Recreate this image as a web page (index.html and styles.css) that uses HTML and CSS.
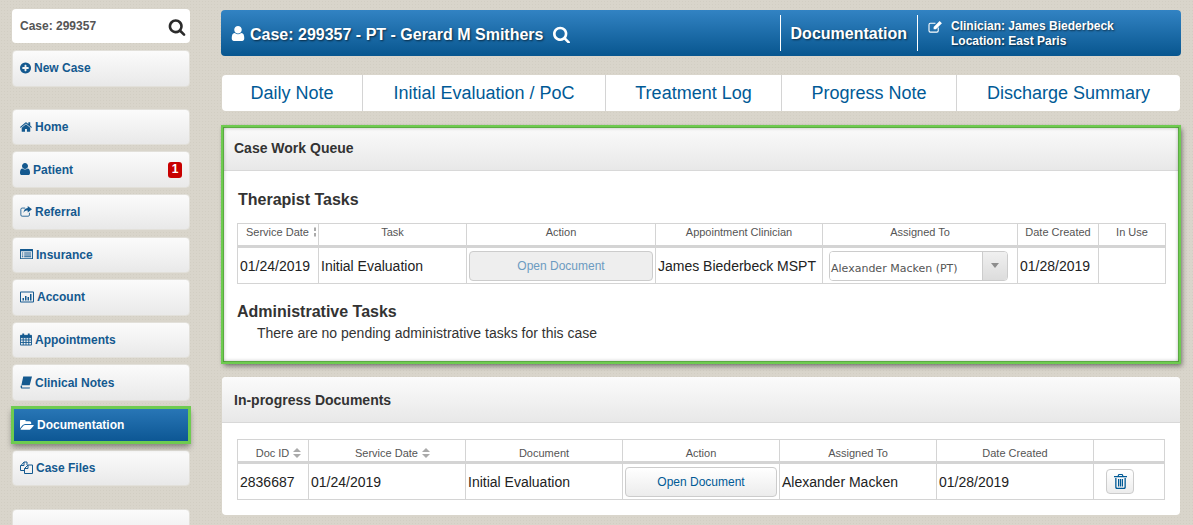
FILE: index.html
```html
<!DOCTYPE html>
<html lang="en">
<head>
    <meta charset="UTF-8">
    <meta name="viewport" content="width=device-width, initial-scale=1.0">
    <title>Case Work Queue</title>
    <link rel="stylesheet" href="styles.css">
</head>
<body>
    <div class="page">
        <aside class="sidebar">
            <div class="case-search">
                <span>Case: 299357</span>
                <svg class="search-icon" viewBox="0 0 1792 1792"><path d="M1216 832q0-185-131.500-316.500t-316.500-131.500-316.500 131.500-131.500 316.500 131.500 316.500 316.500 131.500 316.500-131.500 131.500-316.500zm512 832q0 52-38 90t-90 38q-54 0-90-38l-343-342q-179 124-399 124-143 0-273.500-55.500t-225-150-150-225-55.500-273.500 55.500-273.500 150-225 225-150 273.500-55.500 273.500 55.500 225 150 150 225 55.500 273.500q0 220-124 399l343 343q37 37 37 90z"/></svg>
            </div>
            <a class="nav-item new-case">
                <svg class="nav-icon" viewBox="128 128 1536 1536"><path d="M1344 960v-128q0-26-19-45t-45-19h-256v-256q0-26-19-45t-45-19h-128q-26 0-45 19t-19 45v256h-256q-26 0-45 19t-19 45v128q0 26 19 45t45 19h256v256q0 26 19 45t45 19h128q26 0 45-19t19-45v-256h256q26 0 45-19t19-45zm320-64q0 209-103 385.500t-279.500 279.500-385.500 103-385.500-103-279.500-279.500-103-385.500 103-385.500 279.500-279.500 385.500-103 385.500 103 279.500 279.500 103 385.500z"/></svg>
                New Case
            </a>
            <nav class="nav-list">
                <a class="nav-item">
                    <svg class="nav-icon wide" viewBox="90 230 1620 1320"><path d="M1472 992v480q0 26-19 45t-45 19h-384v-384h-256v384h-384q-26 0-45-19t-19-45v-480q0-1 .5-3t.5-3l575-474 575 474q1 2 1 6zm223-69l-62 74q-8 9-21 11h-3q-13 0-21-7l-692-577-692 577q-12 8-24 7-13-2-21-11l-62-74q-8-10-7-23.500t11-21.500l719-599q32-26 76-26t76 26l244 204v-195q0-14 9-23t23-9h192q14 0 23 9t9 23v408l219 182q10 8 11 21.500t-7 23.500z"/></svg>
                    Home
                </a>
                <a class="nav-item">
                    <svg class="nav-icon slim" viewBox="256 128 1280 1536"><path d="M1536 1399q0 109-62.500 187t-150.500 78h-854q-88 0-150.500-78t-62.500-187q0-85 8.500-160.500t31.500-152 58.500-131 94-89 134.500-34.500q131 128 313 128t313-128q76 0 134.500 34.500t94 89 58.500 131 31.500 152 8.500 160.500zm-256-887q0 159-112.500 271.500t-271.500 112.500-271.500-112.500-112.500-271.500 112.500-271.500 271.500-112.500 271.500 112.500 112.500 271.500z"/></svg>
                    Patient
                    <span class="badge">1</span>
                </a>
                <a class="nav-item">
                    <svg class="nav-icon wide tall" viewBox="0 0 14 13"><path class="line" d="M6 2.500H2.500A1.500 1.500 0 0 0 1 4v6.500A1.500 1.500 0 0 0 2.500 12h7a1.500 1.500 0 0 0 1.500-1.500V8"/><path d="M9 0l5 3.800-5 3.800V5.400C6.500 5.400 5 6 4.200 8.200 4 5 6 2.500 9 2.300z"/></svg>
                    Referral
                </a>
                <a class="nav-item">
                    <svg class="nav-icon wide13" viewBox="0 0 14 11"><path class="fill-even" d="M0.500 0h13a.5.5 0 0 1 .5.500v10a.5.5 0 0 1-.5.500H.5a.5.5 0 0 1-.5-.5V.5A.5.5 0 0 1 .5 0zM1 2.500V10h12V2.500z"/><path d="M2 4h1.500v1H2zM4.500 4H12v1H4.500zM2 6h1.500v1H2zM4.500 6H12v1H4.500zM2 8h1.500v1H2zM4.500 8H12v1H4.500z"/></svg>
                    Insurance
                </a>
                <a class="nav-item">
                    <svg class="nav-icon wider" viewBox="0 0 14 11"><path class="fill-even" d="M1 0h12a1 1 0 0 1 1 1v9a1 1 0 0 1-1 1H1a1 1 0 0 1-1-1V1a1 1 0 0 1 1-1zm0 1v9h12V1z"/><path d="M2.500 6.500h1.500V9H2.500zM5 4.500h1.500V9H5zM7.500 5.500H9V9H7.500zM10 2.500h1.500V9H10z"/></svg>
                    Account
                </a>
                <a class="nav-item">
                    <svg class="nav-icon wide tall" viewBox="0 0 13 13"><path class="line" d="M.5 2h12v10.500H.5zM.5 4.500h12M.5 7h12M.5 9.700h12M3.500 4.500v8M6.500 4.500v8M9.500 4.500v8"/><path d="M2.500 0h2v3h-2zM8.500 0h2v3h-2zM.5 2h12v2.500H.5z"/></svg>
                    Appointments
                </a>
                <a class="nav-item">
                    <svg class="nav-icon wide tall" viewBox="0 0 13 13"><path d="M3.500 0H13l-2.500 9.500H1.500z"/><path d="M1.200 9.500C.4 10.300.4 12.200 1.500 13H10.500l.4-1H2.500c-.6-.4-.6-1.300 0-1.800z"/></svg>
                    Clinical Notes
                </a>
                <a class="nav-item active">
                    <svg class="nav-icon folder" viewBox="0 256 1920 1280"><path d="M1879 952q0 31-31 66l-336 396q-43 51-120.500 86.500t-143.500 35.500h-1088q-34 0-60.500-13t-26.500-43q0-31 31-66l336-396q43-51 120.500-86.500t143.500-35.500h1088q34 0 60.500 13t26.500 43zm-343-344v160h-832q-94 0-197 47.500t-164 119.500l-337 396-5 6q0-4-.5-12.500t-.5-12.500v-960q0-92 66-158t158-66h320q92 0 158 66t66 158v32h544q92 0 158 66t66 158z"/></svg>
                    Documentation
                </a>
                <a class="nav-item">
                    <svg class="nav-icon wide13 tall" viewBox="0 0 13 13"><path class="line" d="M4.500 9.500H.5V5l3.500-4h3v3"/><path class="line" d="M4.500 12.500V7.500L8 4h4.500v8.500z"/><path class="line" d="M4 1v3.500H.5M8 4v3.500H4.500"/></svg>
                    Case Files
                </a>
            </nav>
            <div class="nav-item blank"></div>
        </aside>

        <main class="content">
            <header class="case-bar">
                <div class="case-title">
                    <svg class="bar-icon" viewBox="256 128 1280 1536"><path d="M1536 1399q0 109-62.500 187t-150.500 78h-854q-88 0-150.500-78t-62.500-187q0-85 8.500-160.500t31.500-152 58.500-131 94-89 134.500-34.500q131 128 313 128t313-128q76 0 134.500 34.500t94 89 58.500 131 31.500 152 8.500 160.500zm-256-887q0 159-112.500 271.500t-271.500 112.500-271.500-112.500-112.500-271.500 112.500-271.500 271.500-112.500 271.500 112.500 112.500 271.500z"/></svg>
                    Case: 299357 - PT - Gerard M Smithers
                    <svg class="bar-search" viewBox="64 64 1664 1664"><path d="M1216 832q0-185-131.500-316.500t-316.500-131.500-316.500 131.500-131.500 316.500 131.500 316.500 316.500 131.500 316.500-131.500 131.500-316.500zm512 832q0 52-38 90t-90 38q-54 0-90-38l-343-342q-179 124-399 124-143 0-273.500-55.500t-225-150-150-225-55.500-273.500 55.500-273.500 150-225 225-150 273.500-55.500 273.500 55.500 225 150 150 225 55.500 273.500q0 220-124 399l343 343q37 37 37 90z"/></svg>
                </div>
                <div class="case-section">Documentation</div>
                <div class="case-clinician">
                    <svg class="edit-icon" viewBox="0 0 15 13"><path class="bar-line" d="M8 2.500H2.500A1.500 1.500 0 0 0 1 4v6.500A1.500 1.500 0 0 0 2.500 12h7a1.500 1.500 0 0 0 1.500-1.500V7"/><path d="M12.500 0L15 2.500 8.500 9H6V6.500z"/></svg>
                    <div class="clinician-text">
                        <div>Clinician: James Biederbeck</div>
                        <div>Location: East Paris</div>
                    </div>
                </div>
            </header>

            <nav class="doc-tabs">
                <a class="doc-tab">Daily Note</a>
                <a class="doc-tab">Initial Evaluation / PoC</a>
                <a class="doc-tab">Treatment Log</a>
                <a class="doc-tab">Progress Note</a>
                <a class="doc-tab">Discharge Summary</a>
            </nav>

            <section class="panel queue-panel">
                <h2 class="panel-heading">Case Work Queue</h2>
                <div class="panel-body">
                    <h3 class="task-title">Therapist Tasks</h3>
                    <table class="data-table queue-table">
                        <colgroup><col><col><col><col><col><col><col></colgroup>
                        <thead>
                            <tr>
                                <th>Service Date<span class="sort clipped"><svg viewBox="0 0 8 10"><path d="M4 0l4 4H0zM0 6h8l-4 4z"/></svg></span></th>
                                <th>Task</th>
                                <th>Action</th>
                                <th>Appointment Clinician</th>
                                <th>Assigned To</th>
                                <th>Date Created</th>
                                <th>In Use</th>
                            </tr>
                        </thead>
                        <tbody>
                            <tr>
                                <td>01/24/2019</td>
                                <td>Initial Evaluation</td>
                                <td><button class="doc-btn disabled" type="button">Open Document</button></td>
                                <td>James Biederbeck MSPT</td>
                                <td>
                                    <div class="assign-select">
                                        <span class="assign-value">Alexander Macken (PT)</span>
                                        <span class="assign-arrow"></span>
                                    </div>
                                </td>
                                <td>01/28/2019</td>
                                <td></td>
                            </tr>
                        </tbody>
                    </table>
                    <h3 class="task-title admin-title">Administrative Tasks</h3>
                    <p class="no-tasks">There are no pending administrative tasks for this case</p>
                </div>
            </section>

            <section class="panel docs-panel">
                <h2 class="panel-heading">In-progress Documents</h2>
                <div class="panel-body">
                    <table class="data-table docs-table">
                        <colgroup><col><col><col><col><col><col><col></colgroup>
                        <thead>
                            <tr>
                                <th class="sortable">Doc ID<span class="sort"><svg viewBox="0 0 8 10"><path d="M4 0l4 4H0zM0 6h8l-4 4z"/></svg></span></th>
                                <th class="sortable">Service Date<span class="sort"><svg viewBox="0 0 8 10"><path d="M4 0l4 4H0zM0 6h8l-4 4z"/></svg></span></th>
                                <th>Document</th>
                                <th>Action</th>
                                <th>Assigned To</th>
                                <th>Date Created</th>
                                <th></th>
                            </tr>
                        </thead>
                        <tbody>
                            <tr>
                                <td>2836687</td>
                                <td>01/24/2019</td>
                                <td>Initial Evaluation</td>
                                <td><button class="doc-btn" type="button">Open Document</button></td>
                                <td>Alexander Macken</td>
                                <td>01/28/2019</td>
                                <td class="trash-cell">
                                    <button class="trash-btn" type="button">
                                        <svg viewBox="0 0 13 15"><path d="M4.500 0h4l1 2H13v1.300H0V2h3.500zM5.200 1l-.4 1h3.400l-.4-1z"/><path d="M1.200 4H2.500v9c0 .5.300.8.700.8h6.600c.4 0 .7-.3.7-.8V4h1.300v9.200c0 1-.7 1.800-1.600 1.800H2.800c-.9 0-1.600-.8-1.600-1.800z"/><path d="M4 5h1.200v7.500H4zM5.900 5h1.200v7.500H5.900zM7.800 5H9v7.500H7.800z"/></svg>
                                    </button>
                                </td>
                            </tr>
                        </tbody>
                    </table>
                </div>
            </section>
        </main>
    </div>
</body>
</html>
```

FILE: styles.css
```css
html, body {
    height: 525px;
    overflow: hidden;
}

body {
    font-family: "Liberation Sans", Arial, sans-serif;
    margin: 0;
    padding: 0;
    background-color: #d9d5cb;
    background-image: radial-gradient(#d2cec3 1px, transparent 1px);
    background-size: 3px 3px;
    color: #222;
}

.page {
    display: flex;
    align-items: flex-start;
    padding: 9px 0 0 12px;
}

/* sidebar */
.sidebar {
    width: 178px;
    flex: none;
    display: flex;
    flex-direction: column;
}

.case-search {
    display: flex;
    align-items: center;
    justify-content: space-between;
    height: 34px;
    padding: 0 4px 0 8px;
    background-color: #fff;
    border-radius: 4px;
    font-size: 12px;
    font-weight: bold;
    color: #555;
    margin-bottom: 7px;
}

.search-icon {
    width: 18px;
    height: 18px;
    fill: #2b2b2b;
    margin-top: 2px;
}

.nav-item {
    display: flex;
    align-items: center;
    gap: 3px;
    height: 36.5px;
    padding: 0 7px;
    box-sizing: border-box;
    background: linear-gradient(#fbfbfb, #e9e9e9);
    border: 1px solid #e2e0da;
    border-radius: 4px;
    font-size: 12px;
    font-weight: bold;
    color: #14598f;
    position: relative;
}

.new-case {
    margin-bottom: 22.3px;
}

.nav-list {
    display: flex;
    flex-direction: column;
    gap: 6.1px;
}

.nav-icon {
    width: 11px;
    height: 12px;
    fill: #14598f;
    flex: none;
    margin-top: -1px;
}

.nav-icon.slim {
    width: 10px;
}

.nav-icon.wide {
    width: 12px;
}

.nav-icon.wide13 {
    width: 13px;
}

.nav-icon.wider {
    width: 14px;
}

.nav-icon.tall {
    height: 13px;
}

.nav-icon .line {
    fill: none;
    stroke: #14598f;
    stroke-width: 1;
}

.nav-icon .fill-even {
    fill-rule: evenodd;
}

.nav-icon.folder {
    width: 14px;
    height: 10px;
    fill: #fff;
    margin-right: 0;
}

.badge {
    margin-left: auto;
    width: 14px;
    height: 16px;
    background-color: #c80000;
    color: #fff;
    border-radius: 3px;
    font-size: 12px;
    line-height: 15px;
    text-align: center;
}

.nav-item.active {
    background: linear-gradient(#2a78b8, #0b5592);
    border: none;
    border-radius: 0;
    color: #fff;
    outline: 3px solid #6ecb50;
    outline-offset: -2px;
    box-shadow: 0 4px 6px rgba(0, 0, 0, 0.4);
    padding-left: 8px;
    z-index: 1;
}

.nav-item.blank {
    margin-top: 23px;
}

/* main column */
.content {
    width: 960px;
    margin-left: 31px;
    margin-top: 1px;
    flex: none;
}

.case-bar {
    display: flex;
    align-items: stretch;
    height: 46px;
    padding: 5px 0;
    box-sizing: border-box;
    background: linear-gradient(#3283c3, #08568f);
    border-radius: 4px;
    color: #fff;
    text-shadow: 1px 1px 2px rgba(0, 0, 0, 0.6);
    font-weight: bold;
}

.case-title {
    display: flex;
    align-items: center;
    flex: 1;
    padding: 3px 0 0 10px;
    font-size: 16px;
}

.bar-icon {
    width: 14px;
    height: 15px;
    fill: #fff;
    margin: -3px 5px 0 0;
}

.bar-search {
    width: 17px;
    height: 17px;
    fill: #fff;
    margin-left: 10px;
}

.case-section {
    display: flex;
    align-items: center;
    padding: 2px 10px 0;
    font-size: 16px;
    border-left: 1px solid #fff;
    border-right: 1px solid #fff;
}

.case-clinician {
    display: flex;
    width: 263px;
    box-sizing: border-box;
    padding: 6px 0 0 10px;
    font-size: 12px;
    line-height: 15px;
}

.edit-icon {
    width: 14px;
    height: 12px;
    fill: #fff;
    margin: 0 9px 0 0;
    flex: none;
}

.edit-icon .bar-line {
    fill: none;
    stroke: #fff;
    stroke-width: 1.2;
}

.clinician-text {
    margin-top: -2px;
}

.doc-tabs {
    display: flex;
    height: 36px;
    margin: 19px 1px 15px;
    background-color: #fff;
    border-radius: 4px;
}

.doc-tab {
    display: flex;
    align-items: center;
    justify-content: center;
    flex: 0 0 auto;
    font-size: 18px;
    color: #005a96;
    border-left: 1px solid #d4d4d4;
}

.doc-tab:nth-child(1) { width: 140px; border-left: none; }
.doc-tab:nth-child(2) { width: 242px; }
.doc-tab:nth-child(3) { width: 175px; }
.doc-tab:nth-child(4) { width: 174px; }
.doc-tab:nth-child(5) { width: 223px; }

/* panels */
.panel {
    margin: 0 1px;
    background-color: #fff;
    border-radius: 4px;
}

.queue-panel {
    position: relative;
    height: 237px;
    border-radius: 0;
    outline: 3px solid #6ecb50;
    outline-offset: -2px;
    box-shadow: 2px 3px 5px rgba(0, 0, 0, 0.45), 0 0 3px rgba(0, 0, 0, 0.2);
    margin-bottom: 14px;
}

/* soft shadow just inside the green highlight */
.queue-panel::after {
    content: "";
    position: absolute;
    top: 1px;
    right: 1px;
    bottom: 1px;
    left: 1px;
    box-shadow: inset 0 0 4px rgba(0, 0, 0, 0.4);
}

.docs-panel {
    height: 138px;
}

.panel-heading {
    margin: 0;
    height: 46px;
    padding-left: 12px;
    box-sizing: border-box;
    background: linear-gradient(#fbfbfb, #e8e8e8);
    border-bottom: 1px solid #d8d8d8;
    border-radius: 4px 4px 0 0;
    font-size: 14px;
    line-height: 47px;
    color: #333;
}

.queue-panel .panel-heading {
    height: 45px;
    line-height: 44px;
    border-radius: 0;
}

.panel-body {
    padding: 16px 15px 0;
}

.queue-panel .panel-body {
    padding-top: 20px;
}

.task-title {
    margin: 0 0 14px 1px;
    font-size: 16px;
    line-height: 18px;
    color: #333;
}

.admin-title {
    margin: 19px 0 3px;
}

.no-tasks {
    margin: 0 0 0 20px;
    font-size: 14px;
    line-height: 18px;
    color: #333;
}

/* tables */
.data-table {
    table-layout: fixed;
    border-collapse: collapse;
    width: 928px;
}

.docs-table {
    width: 927px;
}

.data-table th {
    height: 23px;
    padding: 0 2px 5px;
    box-sizing: border-box;
    border: 1px solid #d4d4d4;
    border-bottom: 3px solid #d4d4d4;
    font-size: 11px;
    font-weight: normal;
    color: #555;
    white-space: nowrap;
    overflow: hidden;
}

.docs-table th {
    padding: 5px 2px 0;
}

.docs-table th.sortable {
    padding-left: 13px;
}

.data-table td {
    height: 35px;
    padding: 0 2px;
    border: 1px solid #d4d4d4;
    font-size: 14px;
    color: #222;
    white-space: nowrap;
}

.queue-table col:nth-child(1) { width: 81px; }
.queue-table col:nth-child(2) { width: 148px; }
.queue-table col:nth-child(3) { width: 189px; }
.queue-table col:nth-child(4) { width: 167px; }
.queue-table col:nth-child(5) { width: 195px; }
.queue-table col:nth-child(6) { width: 81px; }
.queue-table col:nth-child(7) { width: 67px; }

.docs-table col:nth-child(1) { width: 71px; }
.docs-table col:nth-child(2) { width: 157px; }
.docs-table col:nth-child(3) { width: 157px; }
.docs-table col:nth-child(4) { width: 157px; }
.docs-table col:nth-child(5) { width: 157px; }
.docs-table col:nth-child(6) { width: 157px; }
.docs-table col:nth-child(7) { width: 71px; }

.sort {
    display: inline-block;
    width: 8px;
    height: 10px;
    margin-left: 4px;
    vertical-align: -1px;
    overflow: hidden;
}

.sort svg {
    display: block;
    width: 8px;
    height: 10px;
    fill: #aaa;
}

.sort.clipped {
    width: 2px;
    margin-left: 5px;
    margin-right: -6px;
}

.sort.clipped svg {
    margin-left: -3px;
}

.doc-btn {
    display: block;
    width: 100%;
    height: 30px;
    font-family: inherit;
    font-size: 12px;
    color: #005a96;
    background: linear-gradient(#fff, #ececec);
    border: 1px solid #ccc;
    border-radius: 4px;
}

.doc-btn.disabled {
    background: #eee;
    color: #6c9bc1;
}

.assign-select {
    display: flex;
    height: 28px;
    margin: 0 7px 0 4px;
    border: 1px solid #ccc;
    border-radius: 4px;
    overflow: hidden;
}

.assign-value {
    flex: 1;
    padding: 7px 0 0 1px;
    font-family: "DejaVu Sans", Verdana, sans-serif;
    font-size: 11px;
    line-height: 20px;
    color: #555;
    background-color: #fff;
}

.assign-arrow {
    position: relative;
    width: 24px;
    background: linear-gradient(#f0f0f0, #dcdcdc);
    border-left: 1px solid #ccc;
}

.assign-arrow::after {
    content: "";
    position: absolute;
    top: 11px;
    left: 8px;
    border-top: 5px solid #8c8c8c;
    border-left: 4px solid transparent;
    border-right: 4px solid transparent;
}

.data-table td.trash-cell {
    padding-left: 12px;
}

.trash-btn {
    display: inline-flex;
    align-items: center;
    justify-content: center;
    width: 28px;
    height: 25px;
    padding: 0;
    background: linear-gradient(#fff, #ececec);
    border: 1px solid #ccc;
    border-radius: 4px;
    vertical-align: middle;
}

.trash-btn svg {
    width: 13px;
    height: 15px;
    fill: #005a96;
}
```
